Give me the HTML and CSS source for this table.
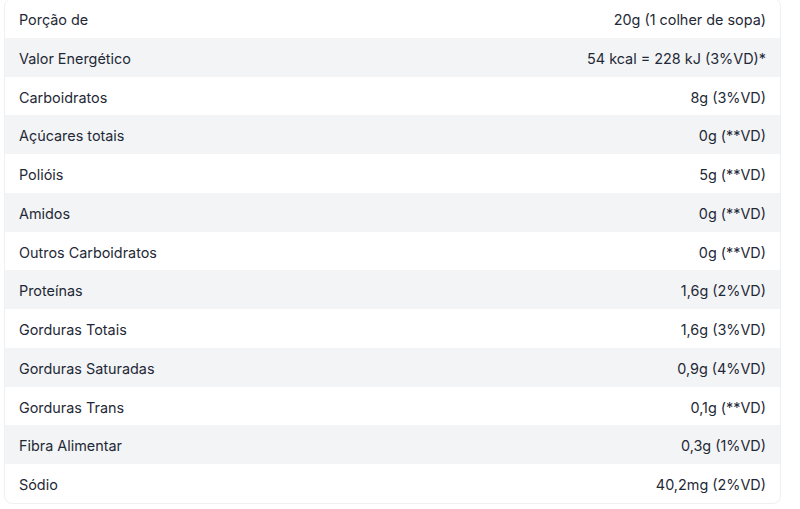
FILE: index.html
```html
<!DOCTYPE html>
<html lang="pt-BR">
    <head>
    <meta charset="utf-8">
    <title>Tabela Nutricional</title>
    <link rel="stylesheet" href="styles.css">
    </head>
    <body>
        <div class="wrapper">
        <!-- tabela nutricional -->
        <table class="nutri">
            <tr><td>Porção de</td><td class="val">20g (1 colher de sopa)</td></tr>
            <tr><td>Valor Energético</td><td class="val">54 kcal = 228 kJ (3%VD)*</td></tr>
            <tr><td>Carboidratos</td><td class="val">8g (3%VD)</td></tr>
            <tr><td>Açúcares totais</td><td class="val">0g (**VD)</td></tr>
            <tr><td>Polióis</td><td class="val">5g (**VD)</td></tr>
            <tr><td>Amidos</td><td class="val">0g (**VD)</td></tr>
            <tr><td>Outros Carboidratos</td><td class="val">0g (**VD)</td></tr>
            <tr><td>Proteínas</td><td class="val">1,6g (2%VD)</td></tr>
            <tr><td>Gorduras Totais</td><td class="val">1,6g (3%VD)</td></tr>
            <tr><td>Gorduras Saturadas</td><td class="val">0,9g (4%VD)</td></tr>
            <tr><td>Gorduras Trans</td><td class="val">0,1g (**VD)</td></tr>
            <tr><td>Fibra Alimentar</td><td class="val">0,3g (1%VD)</td></tr>
            <tr><td>Sódio</td><td class="val">40,2mg (2%VD)</td></tr>
        </table>
        </div>
    </body>
</html>
```

FILE: styles.css
```css
html, body {
    margin: 0;
    background: #fff;
    font-family: Inter, "Noto Sans", Arial, sans-serif;
    font-size: 14.4px;
    color: #1f2937;
}

.wrapper {
    padding: 0 19px 0 4px;
    margin-top: -2px;
}

.nutri {
    width: 100%;
    border-collapse: separate;
    border-spacing: 0;
    border: 1px solid #eef0f3;
    border-radius: 8px;
    overflow: hidden;
}

.nutri td {
    padding: 10px 14px 6px;
    line-height: 22.75px;
}

.nutri tr:nth-child(even) td {
    background-color: #f3f4f6;
}

.val {
    text-align: right;
}
```
